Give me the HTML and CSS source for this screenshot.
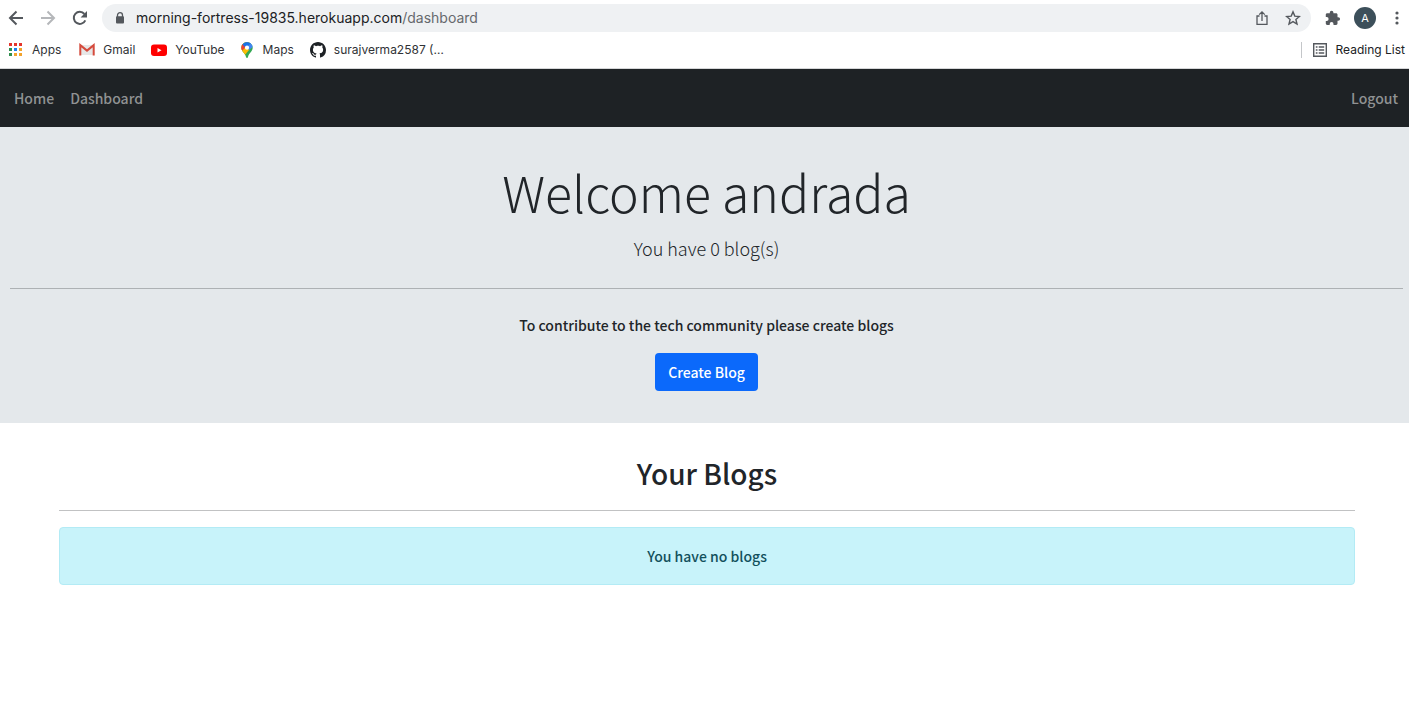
FILE: index.html
```html
<!DOCTYPE html>
<html lang="en">
<head>
<meta charset="utf-8">
<meta name="viewport" content="width=device-width, initial-scale=1">
<title>Dashboard</title>
<link rel="stylesheet" href="styles.css">
</head>
<body>
<div class="browser">
  <div class="toolbar">
    <button class="tool" aria-label="Back"><svg width="16" height="16" viewBox="0 0 16 16" fill="none" stroke="#54585d" stroke-width="2"><path d="M15 8H2.4M8.5 1.5 2 8l6.500 6.500"/></svg></button>
    <button class="tool" aria-label="Forward"><svg width="16" height="16" viewBox="0 0 16 16" fill="none" stroke="#b5b7ba" stroke-width="2"><path d="M1 8h12.600M7.500 1.500 14 8l-6.500 6.500"/></svg></button>
    <button class="tool" aria-label="Reload"><svg width="16" height="16" viewBox="0 0 16 16"><path d="M13.300 10.300A6 6 0 1 1 12.400 4" fill="none" stroke="#54585d" stroke-width="2"/><path d="M15 1v6.400H8.600z" fill="#54585d"/></svg></button>
    <div class="address">
      <svg width="10" height="12" viewBox="0 0 10 12"><path d="M2.500 5V3.200a2.500 2.500 0 0 1 5 0V5" fill="none" stroke="#54585d" stroke-width="1.300"/><rect x="1" y="4.300" width="8" height="7.200" rx="1" fill="#54585d"/></svg>
      <span class="url">morning-fortress-19835.herokuapp.com<span class="path">/dashboard</span></span>
      <button class="tool" aria-label="Share"><svg width="14" height="16" viewBox="0 0 14 16" fill="none" stroke="#54585d" stroke-width="1.300"><path d="M4.500 6H2v8.300h10V6H9.500M7 11V2M4.200 4.600 7 1.800l2.800 2.800"/></svg></button>
      <button class="tool" aria-label="Bookmark this page"><svg width="16" height="16" viewBox="0 0 16 16" fill="none" stroke="#54585d" stroke-width="1.400"><path d="m8 1.900 1.800 4.200 4.600.4-3.500 3 1.100 4.500L8 11.600 4 14l1.100-4.500-3.500-3 4.600-.4z"/></svg></button>
    </div>
    <button class="tool extensions" aria-label="Extensions"><svg width="16" height="16" viewBox="0 0 16 16" fill="#54585d"><path d="M13.300 7.300h-.8V4.600c0-.8-.6-1.400-1.400-1.400H8.400v-.7a1.800 1.800 0 0 0-3.600 0v.7H2.200C1.400 3.200.8 3.800.8 4.600v2.500h.9a1.900 1.900 0 0 1 0 3.800H.8v2.600c0 .8.600 1.400 1.400 1.400h2.500V14a1.900 1.900 0 0 1 3.800 0v.9h2.600c.8 0 1.400-.6 1.400-1.400v-2.700h.8a1.750 1.750 0 0 0 0-3.500z"/></svg></button>
    <button class="avatar" aria-label="Profile">A</button>
    <button class="tool menu" aria-label="Menu"><svg width="4" height="16" viewBox="0 0 4 16" fill="#54585d"><circle cx="2" cy="3" r="1.600"/><circle cx="2" cy="8" r="1.600"/><circle cx="2" cy="13" r="1.600"/></svg></button>
  </div>
  <div class="bookmarks">
    <a class="bookmark" href="#"><svg width="14" height="14" viewBox="0 0 14 14"><path d="M1 0h3v3H1zm5 0h3v3H6zm5 0h3v3h-3z" fill="#e5352c"/><path d="M1 5h3v3H1zm0 5h3v3H1z" fill="#2f8f4e"/><path d="M6 5h3v3H6z" fill="#1a80f0"/><path d="M11 5h3v3h-3zM6 10h3v3H6zm5 0h3v3h-3z" fill="#f2a32c"/></svg>Apps</a>
    <a class="bookmark gmail" href="#"><svg width="16" height="14" viewBox="0 0 16 14"><path d="M2 2h12v10H2z" fill="#e7e7e7"/><path d="M1.300 12.500V2.200L8 7.600l6.700-5.400v10.300" fill="none" stroke="#d54b3d" stroke-width="2"/></svg>Gmail</a>
    <a class="bookmark youtube" href="#"><svg width="16" height="14" viewBox="0 0 16 14"><rect y="1.500" width="16" height="11.500" rx="3" fill="#f00"/><path d="m6.500 5 4 2.250-4 2.250z" fill="#fff"/></svg>YouTube</a>
    <a class="bookmark maps" href="#"><svg width="12" height="16" viewBox="0 0 12 16"><clipPath id="pin"><path d="M6 0a5.700 5.700 0 0 0-5.700 5.700c0 3.600 3.700 5 4.700 9.300.3 1.300 1.700 1.300 2 0 1-4.300 4.700-5.700 4.700-9.300A5.700 5.700 0 0 0 6 0z"/></clipPath><g clip-path="url(#pin)"><path d="M0 0h12v16H0z" fill="#34a853"/><path d="M0 10 6 4l3-4H0z" fill="#fbbc04"/><path d="m0 0 5 5-5 5z" fill="#ea4335"/><path d="M1 2 5 6l6-5-5-3z" fill="#1a73e8"/><path d="m6 5 4-4 3 3-5 4z" fill="#4285f4"/><path d="m0 10 5-5 3 3-5 6z" fill="#fbbc04"/></g><circle cx="6" cy="5.700" r="2.100" fill="#fff"/></svg>Maps</a>
    <a class="bookmark github" href="#"><svg width="16" height="16" viewBox="0 0 16 16" fill="#1d2125"><path d="M8 0C3.580 0 0 3.580 0 8c0 3.540 2.290 6.530 5.470 7.590.4.070.55-.17.55-.38 0-.19-.01-.82-.01-1.490-2.010.37-2.530-.49-2.690-.94-.09-.23-.48-.94-.82-1.130-.28-.15-.68-.52-.01-.53.63-.01 1.080.58 1.230.82.72 1.210 1.870.87 2.330.66.070-.52.28-.87.510-1.070-1.780-.2-3.640-.89-3.640-3.950 0-.87.310-1.590.82-2.150-.08-.2-.36-1.020.08-2.120 0 0 .67-.21 2.200.82.640-.18 1.320-.27 2-.27s1.360.09 2 .27c1.530-1.040 2.200-.82 2.200-.82.440 1.100.16 1.920.08 2.120.510.56.82 1.270.82 2.150 0 3.070-1.870 3.750-3.650 3.950.290.25.540.73.540 1.480 0 1.070-.01 1.930-.01 2.200 0 .21.150.46.550.38A8.010 8.010 0 0 0 16 8c0-4.420-3.580-8-8-8z"/></svg>surajverma2587 (…</a>
    <button class="reading"><svg width="14" height="14" viewBox="0 0 14 14" fill="none" stroke="#54585d" stroke-width="1.400"><path d="M.7.7h12.600v12.600H.7zM2.800 4h1.700M2.800 7h1.700M2.800 10h1.700M5.700 4h5.500M5.700 7h5.500M5.700 10h5.500"/></svg>Reading List</button>
  </div>
</div>
<nav class="navbar">
  <a href="#">Home</a>
  <a href="#">Dashboard</a>
  <a class="logout" href="#">Logout</a>
</nav>
<header class="hero">
  <h1>Welcome andrada</h1>
  <p class="lead">You have 0 blog(s)</p>
  <hr>
  <p class="prompt">To contribute to the tech community please create blogs</p>
  <button class="create">Create Blog</button>
</header>
<main class="content">
  <section class="container">
    <h2>Your Blogs</h2>
    <hr>
    <div class="alert">You have no blogs</div>
  </section>
</main>
</body>
</html>
```
FILE: styles.css
```css
* { box-sizing: border-box; }
body {
  margin: 0;
  background: #fff;
  color: #212529;
  font: 500 14px/24px "Noto Sans CJK JP", "Noto Sans", sans-serif;
}
h1, h2, p { margin: 0; }
a { color: inherit; text-decoration: none; }
button { border: 0; padding: 0; background: none; font: inherit; color: inherit; }
svg { display: block; flex: none; }
hr { height: 1px; margin: 0; border: 0; background: #212529; opacity: .28; }

.browser {
  font-family: Inter, "Liberation Sans", sans-serif;
  font-weight: 400;
  border-bottom: 1px solid #d5d6d8;
}
.toolbar { display: flex; align-items: center; gap: 16px; height: 36px; padding: 0 10px 0 8px; }
.address {
  display: flex;
  flex: 1;
  align-items: center;
  gap: 16px;
  height: 28px;
  margin-left: -2px;
  padding: 0 10px 0 13px;
  border-radius: 14px;
  background: #eff1f3;
}
.url { flex: 1; margin-left: -5px; line-height: 20px; color: #202124; }
.path { color: #66696d; }
.extensions { margin-left: -2px; }
.menu { margin-left: 3px; }
.avatar {
  width: 22px;
  height: 22px;
  margin-left: -3px;
  border-radius: 50%;
  background: #3c4f5a;
  color: #fff;
  font-size: 11px;
  line-height: 22px;
}
.bookmarks {
  display: flex;
  align-items: center;
  gap: 16px;
  height: 32px;
  padding: 0 4px 5px 8px;
  font-size: 12px;
  line-height: 16px;
  color: #303236;
}
.bookmark { display: flex; align-items: center; gap: 8px; }
.bookmark:first-child { gap: 10px; margin-right: 2px; }
.maps { gap: 10px; }
.reading {
  display: flex;
  align-items: center;
  gap: 9px;
  margin-left: auto;
  padding-left: 11px;
  border-left: 1px solid #c4c6c9;
  color: #202124;
}

.navbar {
  display: flex;
  gap: 16px;
  padding: 17px 11px 17px 14px;
  background: #1e2225;
  color: #909293;
}
.logout { margin-left: auto; }

.hero { padding: 32px 6px 32px 10px; background: #e4e8eb; text-align: center; }
.hero h1 { margin-bottom: 10px; font-size: 50px; font-weight: 300; line-height: 64px; }
.lead { margin-bottom: 25px; font-size: 18px; font-weight: 300; line-height: 30px; }
.prompt { margin: 24px 0 16px; }
.create {
  padding: 7px 13px;
  border-radius: 4px;
  background: #0b69fb;
  color: #fff;
  vertical-align: top;
}

.content { padding: 32px 0 32px 5px; text-align: center; }
.container { max-width: 1320px; margin: 0 auto; padding: 0 12px; }
.container h2 { margin-bottom: 18px; font-size: 28px; font-weight: 500; line-height: 37px; }
.alert {
  margin-top: 16px;
  padding: 16px;
  border: 1px solid #b3ebf5;
  border-radius: 4px;
  background: #c8f3fa;
  color: #12505c;
}
```
